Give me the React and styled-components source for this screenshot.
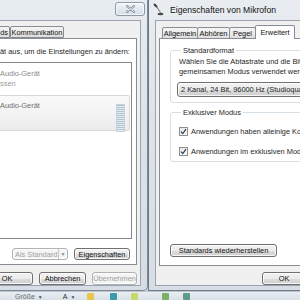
import styled, { createGlobalStyle } from "styled-components";

const GlobalStyle = createGlobalStyle`
  html, body { margin: 0; padding: 0; }
  body {
    font-family: "Liberation Sans", Arial, sans-serif;
    font-size: 7.4px;
    color: #1e1e1e;
  }
`;

const Page = styled.div`
  width: 300px;
  height: 300px;
  overflow: hidden;
  display: flex;
  flex-direction: column;
  background: #cfd8e2;
`;

const Desktop = styled.div`
  display: flex;
  height: 291px;
  flex-shrink: 0;
`;

const Frame = styled.div`
  flex-shrink: 0;
  display: flex;
  flex-direction: column;
  background: linear-gradient(180deg, #e9edf1 0%, #dde3e9 40%, #d6dde5 100%);
  box-sizing: border-box;
`;

const LeftFrame = styled(Frame)`
  width: 148px;
  border-right: 1px solid #7d8892;
  border-bottom: 1px solid #7d8892;
  border-bottom-right-radius: 5px;
`;

const RightFrame = styled(Frame)`
  width: 264px;
  border-left: 1px solid #6f7a85;
  border-bottom: 1px solid #6f7a85;
  padding-left: 6px;
`;

const TitleBar = styled.div`
  height: 20px;
  display: flex;
  align-items: flex-start;
  flex-shrink: 0;
  justify-content: ${(p) => (p.$right ? "flex-end" : "flex-start")};
  padding: ${(p) => (p.$right ? "2px 2px 0 0" : "3px 0 0 0")};
  margin-left: ${(p) => (p.$right ? "0" : "-3px")};
  box-sizing: border-box;
`;

const CloseButton = styled.div`
  width: 28px;
  height: 12px;
  border: 1px solid #8d99a6;
  border-radius: 3px;
  background: linear-gradient(180deg, #f3f6f9 0%, #e2e8ee 50%, #d6dee6 100%);
  display: flex;
  align-items: center;
  justify-content: center;
  box-shadow: inset 0 0 0 1px rgba(255, 255, 255, 0.7);
`;

const Title = styled.span`
  font-size: 8.6px;
  color: #111;
  margin-left: 6px;
  margin-top: 2px;
`;

const Body = styled.div`
  flex: 1;
  display: flex;
  flex-direction: column;
  background: #f0f0f0;
  padding: 4px 3px 0 ${(p) => (p.$right ? "3px" : "0")};
  margin: ${(p) => (p.$right ? "0 0 4px 0" : "0 6px 4px 0")};
  box-sizing: border-box;
  border: 1px solid #9aa4ae;
  border-left: ${(p) => (p.$right ? "1px solid #9aa4ae" : "none")};
`;

const TabRow = styled.div`
  display: flex;
  align-items: flex-end;
  height: ${(p) => p.$h}px;
  padding-left: ${(p) => p.$indent || 0}px;
  position: relative;
  z-index: 1;
`;

const Tab = styled.div`
  width: ${(p) => p.$w}px;
  height: ${(p) => (p.$active ? 14 : 12)}px;
  margin-left: ${(p) => p.$ml || 0}px;
  box-sizing: border-box;
  border: 1px solid #898c95;
  border-bottom: ${(p) => (p.$active ? "none" : "1px solid #898c95")};
  border-radius: 2px 2px 0 0;
  background: ${(p) =>
    p.$active ? "#fff" : "linear-gradient(180deg, #f5f5f5 0%, #ebebeb 50%, #dddddd 100%)"};
  display: flex;
  align-items: center;
  justify-content: ${(p) => (p.$alignRight ? "flex-end" : "center")};
  padding: ${(p) => (p.$alignRight ? "0 1px 0 0" : "0")};
  white-space: nowrap;
  color: #111;
`;

const Panel = styled.div`
  height: ${(p) => p.$h}px;
  flex-shrink: 0;
  background: #fff;
  border: 1px solid #898c95;
  margin-left: ${(p) => (p.$cut ? "-1px" : "0")};
  box-sizing: border-box;
  display: flex;
  flex-direction: column;
  padding: ${(p) => p.$pad};
`;

const Text = styled.div`
  white-space: nowrap;
  line-height: 10px;
  color: ${(p) => p.$color || "#1e1e1e"};
`;

const ListBox = styled.div`
  margin-top: 5px;
  margin-left: -1px;
  width: 133px;
  height: 177px;
  border: 1px solid #828790;
  box-sizing: border-box;
  display: flex;
  flex-direction: column;
  padding-top: 1px;
`;

const DeviceItem = styled.div`
  height: ${(p) => p.$h}px;
  width: 130px;
  box-sizing: border-box;
  display: flex;
  align-items: flex-start;
  justify-content: space-between;
  padding: ${(p) => p.$pad};
  border: 1px solid ${(p) => (p.$selected ? "#d9d9d9" : "transparent")};
  border-left: none;
  border-radius: 0 2px 2px 0;
  background: ${(p) =>
    p.$selected ? "linear-gradient(180deg, #fafafa 0%, #ececec 100%)" : "transparent"};
`;

const Meter = styled.div`
  width: 9px;
  height: 28px;
  margin-top: 3px;
  margin-right: 4px;
  background: repeating-linear-gradient(180deg, #aec3cf 0 1px, #e6edf1 1px 2px);
  border: 1px solid #c5d3db;
  box-sizing: border-box;
`;

const ButtonRow = styled.div`
  display: flex;
  justify-content: flex-end;
  gap: 6px;
  margin-top: ${(p) => p.$mt}px;
  padding-right: ${(p) => p.$pr || 0}px;
`;

const Button = styled.div`
  width: ${(p) => p.$w}px;
  height: ${(p) => p.$h || 13}px;
  box-sizing: border-box;
  flex-shrink: 0;
  border: 1px solid ${(p) => (p.$disabled ? "#adb2b5" : "#707070")};
  border-radius: 3px;
  background: ${(p) =>
    p.$disabled
      ? "#f4f4f4"
      : "linear-gradient(180deg, #f2f2f2 0%, #ebebeb 50%, #dddddd 51%, #cfcfcf 100%)"};
  box-shadow: inset 0 0 0 1px rgba(255, 255, 255, 0.8);
  color: ${(p) => (p.$disabled ? "#a0a0a0" : "#111")};
  display: flex;
  align-items: center;
  justify-content: center;
  white-space: nowrap;
  align-self: ${(p) => (p.$start ? "flex-start" : "auto")};
`;

const SplitButton = styled(Button)`
  justify-content: space-between;
  padding: 0 0 0 2px;
`;

const SplitArrow = styled.div`
  width: 8px;
  height: 100%;
  border-left: 1px solid #c4c8cb;
  display: flex;
  align-items: center;
  justify-content: center;
  font-size: 5px;
  color: #8a8a8a;
`;

const Group = styled.fieldset`
  margin: ${(p) => p.$mt}px 0 0 0;
  padding: ${(p) => p.$pad};
  border: 1px solid #d5dfe5;
  border-radius: 3px;
  min-width: 0;
`;

const Legend = styled.legend`
  padding: 0 2px;
  margin-left: 2px;
  line-height: 9px;
  color: #1e1e1e;
`;

const Combo = styled.div`
  margin: 5px 0 0 -2px;
  height: 15px;
  box-sizing: border-box;
  border: 1px solid #707070;
  border-radius: 3px;
  background: linear-gradient(180deg, #f2f2f2 0%, #ebebeb 50%, #dddddd 51%, #cfcfcf 100%);
  box-shadow: inset 0 0 0 1px rgba(255, 255, 255, 0.8);
  display: flex;
  align-items: center;
  padding-left: 3px;
  white-space: nowrap;
  overflow: hidden;
`;

const CheckRow = styled.div`
  display: flex;
  align-items: center;
  gap: 3px;
  height: 10px;
  margin-top: ${(p) => p.$mt}px;
  white-space: nowrap;
`;

const CheckBox = styled.div`
  width: 9px;
  height: 9px;
  box-sizing: border-box;
  border: 1px solid #8f8f8f;
  background: linear-gradient(135deg, #e6e6e6 0%, #fbfbfb 100%);
  display: flex;
  align-items: center;
  justify-content: center;
  flex-shrink: 0;
`;

const Spacer = styled.div`
  flex: 1;
`;

const Taskbar = styled.div`
  flex: 1;
  display: flex;
  align-items: center;
  gap: 6px;
  padding-left: 15px;
  background: linear-gradient(180deg, #e9eef3 0%, #d8e0e8 100%);
  border-top: 1px solid #b9c4cf;
  color: #6a6a6a;
  font-size: 7px;
  white-space: nowrap;
`;

const TaskLabel = styled.span`
  margin-left: ${(p) => p.$ml || 0}px;
  color: ${(p) => p.$color || "#6a6a6a"};
`;

const TaskIcon = styled.div`
  width: 7px;
  height: 7px;
  border-radius: 1px;
  background: ${(p) => p.$c};
  margin-left: ${(p) => p.$ml || 0}px;
`;

const Caret = styled.span`
  font-size: 5px;
  color: #555;
  margin-left: 3px;
`;

function CloseGlyph() {
  return (
    <svg width="9" height="8" viewBox="0 0 9 8">
      <path d="M1 1 L8 7 M8 1 L1 7" stroke="#7b8793" strokeWidth="2.2" strokeLinecap="round" />
      <path d="M1 1 L8 7 M8 1 L1 7" stroke="#eef2f5" strokeWidth="0.9" strokeLinecap="round" />
    </svg>
  );
}

function MicIcon() {
  return (
    <svg width="12" height="13" viewBox="0 0 12 13">
      <path d="M2.5 1.5 L4.5 3.5" stroke="#333" strokeWidth="1.8" strokeLinecap="round" />
      <path d="M4.5 3.5 L8.5 9.5" stroke="#555" strokeWidth="0.9" />
      <ellipse cx="8.5" cy="11" rx="3" ry="1.2" fill="#4a4a4a" />
    </svg>
  );
}

function CheckGlyph() {
  return (
    <svg width="7" height="7" viewBox="0 0 7 7">
      <path d="M1 3.6 L2.8 5.6 L6 1.2" stroke="#2c3e55" strokeWidth="1.2" fill="none" />
    </svg>
  );
}

export default function App() {
  return (
    <Page>
      <GlobalStyle />
      <Desktop>
        <LeftFrame>
          <TitleBar $right>
            <CloseButton>
              <CloseGlyph />
            </CloseButton>
          </TitleBar>
          <Body>
            <TabRow $h={13}>
              <Tab $w={31} $ml={-21} $alignRight>Sounds</Tab>
              <Tab $w={54}>Kommunikation</Tab>
            </TabRow>
            <Panel $h={227} $cut $pad="8px 0 0 0">
              <Text>ät aus, um die Einstellungen zu ändern:</Text>
              <ListBox>
                <DeviceItem $h={31} $pad="4px 0 0 0">
                  <div>
                    <Text> </Text>
                    <Text $color="#8a8a8a">Audio-Gerät</Text>
                    <Text $color="#9a9a9a">ssen</Text>
                  </div>
                </DeviceItem>
                <DeviceItem $h={36} $selected $pad="5px 0 0 0">
                  <div>
                    <Text> </Text>
                    <Text $color="#6e6e6e">Audio-Gerät</Text>
                  </div>
                  <Meter />
                </DeviceItem>
              </ListBox>
              <ButtonRow $mt={9} $pr={6}>
                <SplitButton $w={56} $h={12} $disabled>
                  <span>Als Standard</span>
                  <SplitArrow>▼</SplitArrow>
                </SplitButton>
                <Button $w={56} $h={12}>Eigenschaften</Button>
              </ButtonRow>
            </Panel>
            <ButtonRow $mt={7}>
              <Button $w={52}>OK</Button>
              <Button $w={47}>Abbrechen</Button>
              <Button $w={45} $disabled>Übernehmen</Button>
            </ButtonRow>
          </Body>
        </LeftFrame>

        <RightFrame>
          <TitleBar>
            <MicIcon />
            <Title>Eigenschaften von Mikrofon</Title>
          </TitleBar>
          <Body $right>
            <TabRow $h={14} $indent={3}>
              <Tab $w={36}>Allgemein</Tab>
              <Tab $w={33} $ml={-1}>Abhören</Tab>
              <Tab $w={27} $ml={-1}>Pegel</Tab>
              <Tab $w={40} $ml={-1} $active>Erweitert</Tab>
            </TabRow>
            <Panel $h={228} $pad="7px 10px 8px 10px" style={{ marginTop: -1 }}>
              <Group $mt={0} $pad="2px 8px 5px 8px">
                <Legend>Standardformat</Legend>
                <Text>Wählen Sie die Abtastrate und die Bittiefe aus, die im</Text>
                <Text>gemeinsamen Modus verwendet werden soll.</Text>
                <Combo>2 Kanal, 24 Bit, 96000 Hz (Studioqualität)</Combo>
              </Group>
              <Group $mt={5} $pad="0 8px 5px 8px">
                <Legend>Exklusiver Modus</Legend>
                <CheckRow $mt={9}>
                  <CheckBox>
                    <CheckGlyph />
                  </CheckBox>
                  Anwendungen haben alleinige Kontrolle über dieses Gerät
                </CheckRow>
                <CheckRow $mt={10}>
                  <CheckBox>
                    <CheckGlyph />
                  </CheckBox>
                  Anwendungen im exklusiven Modus Vorrang geben
                </CheckRow>
              </Group>
              <Spacer />
              <Button $w={107} $start>
                Standards wiederherstellen
              </Button>
            </Panel>
            <ButtonRow $mt={6}>
              <Button $w={44}>OK</Button>
              <Button $w={46}>Abbrechen</Button>
              <Button $w={44} $disabled>Übernehmen</Button>
            </ButtonRow>
          </Body>
        </RightFrame>
      </Desktop>
      <Taskbar>
        <TaskLabel>
          Größe<Caret>▼</Caret>
        </TaskLabel>
        <TaskLabel $ml={14} $color="#333">
          A<Caret>▼</Caret>
        </TaskLabel>
        <TaskIcon $c="#e8c64a" $ml={6} />
        <TaskIcon $c="#3a9aa6" $ml={10} />
        <TaskIcon $c="#c8d86a" $ml={8} />
        <TaskIcon $c="#7bb06a" $ml={18} />
        <TaskIcon $c="#5f9b8a" $ml={8} />
      </Taskbar>
    </Page>
  );
}
